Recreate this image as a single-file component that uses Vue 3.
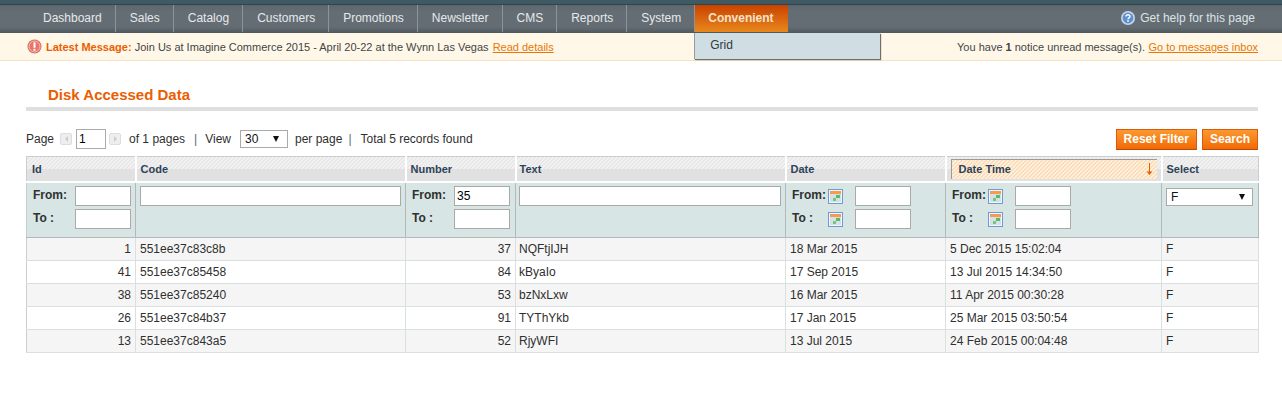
<template>
  <div class="page">
    <div class="strip"></div>
    <nav class="nav">
      <ul class="menu">
        <li v-for="item in menu" :key="item">{{ item }}</li>
        <li class="activo">
          Convenient
          <div class="desplegable">Grid</div>
        </li>
      </ul>
      <a class="help">
        <svg width="14" height="14" viewBox="0 0 14 14">
          <circle cx="7" cy="7" r="7" fill="#c6d8ee" />
          <circle cx="7" cy="7" r="5.4" fill="#5f90cc" />
          <path d="M5 5.6c0-2.5 4-2.5 4 0 0 1.4-2 1.3-2 2.7" fill="none" stroke="#fff" stroke-width="1.4" />
          <rect x="6.2" y="9.2" width="1.6" height="1.5" fill="#fff" />
        </svg>
        Get help for this page
      </a>
    </nav>
    <div class="aviso">
      <div class="aviso-izq">
        <svg width="15" height="15" viewBox="0 0 15 15">
          <circle cx="7.5" cy="7.5" r="7" fill="#d9675a" />
          <circle cx="7.5" cy="7.5" r="5.5" fill="#e8776a" stroke="#f6c4bc" stroke-width="1" />
          <rect x="6.5" y="3.4" width="2" height="5.4" fill="#fff" />
          <rect x="6.5" y="9.8" width="2" height="1.9" fill="#fff" />
        </svg>
        <span><b>Latest Message:</b> Join Us at Imagine Commerce 2015 - April 20-22 at the Wynn Las Vegas <a class="leer">Read details</a></span>
      </div>
      <div>You have <strong>1</strong> notice unread message(s). <a class="inbox">Go to messages inbox</a></div>
    </div>

    <main class="contenido">
      <h3 class="titulo">Disk Accessed Data</h3>

      <div class="acciones">
        <div class="pager">
          <span>Page</span>
          <span class="flecha"><i class="izq"></i></span>
          <input class="pagina" value="1" />
          <span class="flecha sig"><i class="der"></i></span>
          <span class="of">of 1 pages</span>
          <span class="sep">|</span>
          <span>View</span>
          <span class="combo vista">30<i></i></span>
          <span>per page</span>
          <span class="sep dos">|</span>
          <span>Total 5 records found</span>
        </div>
        <div class="botones">
          <button>Reset Filter</button>
          <button>Search</button>
        </div>
      </div>

      <table class="grid">
        <colgroup>
          <col style="width: 109px" />
          <col style="width: 270px" />
          <col style="width: 110px" />
          <col style="width: 270px" />
          <col style="width: 160px" />
          <col style="width: 216px" />
          <col style="width: 97px" />
        </colgroup>
        <thead>
          <tr class="cabecera">
            <th>Id</th>
            <th>Code</th>
            <th>Number</th>
            <th class="col-texto">Text</th>
            <th>Date</th>
            <th class="orden">
              <span class="orden-caja">Date Time
                <svg width="7" height="13" viewBox="0 0 7 13">
                  <path d="M3.5 0v11" stroke="#eb5e00" stroke-width="1" />
                  <path d="M0.5 8.5h6L3.5 12z" fill="#eb5e00" />
                </svg>
              </span>
            </th>
            <th>Select</th>
          </tr>
          <tr class="filtros">
            <th>
              <div class="rango"><label>From:</label><input /></div>
              <div class="rango"><label>To :</label><input /></div>
            </th>
            <th><input class="ancho" /></th>
            <th class="numero">
              <div class="rango"><label>From:</label><input value="35" /></div>
              <div class="rango"><label>To :</label><input /></div>
            </th>
            <th><input class="ancho texto" /></th>
            <th v-for="n in 2" :key="n">
              <div v-for="l in ['From:', 'To :']" :key="l" class="rango fecha">
                <label>{{ l }}</label>
                <svg class="cal" width="15" height="15" viewBox="0 0 15 15">
                  <rect x="0.5" y="0.5" width="14" height="14" fill="#f1f6fa" stroke="#6f9bd4" />
                  <rect x="2" y="2" width="11" height="3" fill="#f79a4f" />
                  <rect x="2" y="5" width="11" height="8" fill="#d3e2e8" />
                  <rect x="8" y="6" width="4" height="3" fill="#5fb760" />
                  <rect x="5" y="9" width="3" height="3" fill="#7cc47c" />
                </svg>
                <input />
              </div>
            </th>
            <th><span class="combo selector">F<i></i></span></th>
          </tr>
        </thead>
        <tbody>
          <tr v-for="(fila, i) in filas" :key="fila.id" :class="{ par: i % 2 === 0 }">
            <td class="num">{{ fila.id }}</td>
            <td>{{ fila.code }}</td>
            <td class="num">{{ fila.number }}</td>
            <td class="col-texto">{{ fila.text }}</td>
            <td>{{ fila.date }}</td>
            <td>{{ fila.time }}</td>
            <td>F</td>
          </tr>
        </tbody>
      </table>
    </main>
  </div>
</template>

<script setup>
const menu = ['Dashboard', 'Sales', 'Catalog', 'Customers', 'Promotions', 'Newsletter', 'CMS', 'Reports', 'System']

const filas = [
  { id: 1, code: '551ee37c83c8b', number: 37, text: 'NQFtjIJH', date: '18 Mar 2015', time: '5 Dec 2015 15:02:04' },
  { id: 41, code: '551ee37c85458', number: 84, text: 'kByaIo', date: '17 Sep 2015', time: '13 Jul 2015 14:34:50' },
  { id: 38, code: '551ee37c85240', number: 53, text: 'bzNxLxw', date: '16 Mar 2015', time: '11 Apr 2015 00:30:28' },
  { id: 26, code: '551ee37c84b37', number: 91, text: 'TYThYkb', date: '17 Jan 2015', time: '25 Mar 2015 03:50:54' },
  { id: 13, code: '551ee37c843a5', number: 52, text: 'RjyWFI', date: '13 Jul 2015', time: '24 Feb 2015 00:04:48' }
]
</script>

<style>
body {
  background: #fff;
}
</style>

<style scoped>
.page {
  font-family: "Liberation Sans", Arial, sans-serif;
  font-size: 12px;
  color: #2f2f2f;
  height: 408px;
  overflow: hidden;
}

.strip {
  height: 4px;
  background: #3f5a63;
  border-bottom: 1px solid #30444c;
  box-sizing: content-box;
}

.nav {
  height: 28px;
  display: flex;
  justify-content: space-between;
  align-items: stretch;
  background: linear-gradient(#5d666d 0, #646d74 6px, #646d74 22px, #4f575c 28px);
  color: #e6e9ea;
}

.menu {
  list-style: none;
  margin: 0;
  padding: 0 0 0 29px;
  display: flex;
  height: 27px;
}

.menu li {
  position: relative;
  padding: 0 13px 0 14px;
  line-height: 26px;
  border-right: 1px solid #8d9499;
}

.menu li.activo {
  width: 93px;
  padding: 0 0 0 13px;
  box-sizing: border-box;
  border-right: 0;
  font-weight: bold;
  color: #f6e2cd;
  background: linear-gradient(#c94300, #e8871c);
}

.desplegable {
  position: absolute;
  left: -1px;
  top: 28px;
  width: 186px;
  height: 26px;
  padding-left: 15px;
  box-sizing: border-box;
  line-height: 24px;
  font-weight: normal;
  color: #2f3a40;
  background: #cfdee3;
  border-left: 1px solid #9a9a9a;
  box-shadow: 1px 1px 1px rgba(0, 0, 0, 0.55);
  z-index: 2;
}

.help {
  display: flex;
  align-items: center;
  gap: 5px;
  padding: 0 27px 2px 0;
  color: #dfe3e5;
}

.aviso {
  height: 27px;
  padding: 0 24px 0 27px;
  display: flex;
  justify-content: space-between;
  align-items: center;
  font-size: 11px;
  background: #fff8e9;
  border-bottom: 1px solid #f5e2c2;
  color: #444;
  box-sizing: content-box;
}

.aviso-izq {
  display: flex;
  align-items: center;
}

.aviso-izq svg {
  margin-right: 4px;
}

.aviso b {
  color: #eb5e00;
}

.aviso a {
  color: #ea7601;
  text-decoration: underline;
}

.aviso .leer {
  margin-left: 1px;
}

.aviso .inbox {
  margin-left: 0.5px;
}

.contenido {
  padding: 0 24px 0 26px;
}

.titulo {
  margin: 24px 0 0;
  height: 22px;
  padding-left: 22px;
  line-height: 20px;
  font-size: 15px;
  font-weight: bold;
  color: #eb5e00;
  border-bottom: 4px solid #dfdfdf;
  box-sizing: content-box;
}

.acciones {
  margin-top: 18px;
  height: 27px;
  display: flex;
  justify-content: space-between;
}

.pager {
  display: flex;
  align-items: center;
  height: 20px;
  white-space: pre;
}

.flecha {
  width: 12px;
  height: 12px;
  margin: 0 4px 0 6px;
  background: #eee;
  border: 1px solid #ddd;
  border-radius: 2px;
  display: flex;
  align-items: center;
  justify-content: center;
  box-sizing: border-box;
}

.flecha.sig {
  margin: 0 4px 0 3px;
}

.flecha i {
  width: 0;
  height: 0;
  border: 3px solid transparent;
}

.flecha .izq {
  border-right-color: #ccc;
  border-left-width: 0;
}

.flecha .der {
  border-left-color: #ccc;
  border-right-width: 0;
}

.pagina {
  width: 30px;
  height: 20px;
  padding: 0 2px;
  box-sizing: border-box;
  border: 1px solid #aaa;
  font: 12px "Liberation Sans", Arial, sans-serif;
}

.of {
  margin-left: 4px;
}

.sep {
  margin: 0 8px 0 9px;
  color: #5a6b75;
}

.sep.dos {
  margin: 0 9px 0 6px;
}

.combo {
  display: inline-flex;
  align-items: center;
  justify-content: space-between;
  box-sizing: border-box;
  background: #fff;
  border: 1px solid #aaa;
  color: #111;
  font-weight: normal;
}

.combo i {
  width: 0;
  height: 0;
  border-left: 3.5px solid transparent;
  border-right: 3.5px solid transparent;
  border-top: 6px solid #111;
}

.vista {
  width: 48px;
  height: 18px;
  margin: 0 7px 0 9px;
  padding: 0 8px 0 4px;
}

.botones {
  display: flex;
  gap: 5px;
}

.botones button {
  height: 21px;
  padding: 0 7px 1px;
  font: bold 12px "Liberation Sans", Arial, sans-serif;
  color: #fff;
  background: linear-gradient(#fb9a2f, #f26a06);
  border: 1px solid #d95a0a;
  border-bottom-color: #b54a08;
}

.grid {
  width: 1232px;
  table-layout: fixed;
  border-collapse: collapse;
  border: 1px solid #c9cfd0;
}

.cabecera th {
  height: 25px;
  box-sizing: border-box;
  padding: 0 0 0 4px;
  text-align: left;
  font-size: 11px;
  color: #2e4258;
  border-right: 2px solid #fff;
  border-bottom: 2px solid #fff;
  background:
    repeating-linear-gradient(135deg, #f1f1f1 0, #f1f1f1 1.414px, #e8e8e8 1.414px, #e8e8e8 2.828px) top / 100% 12px no-repeat,
    #e1e1e1;
}

.cabecera th:first-child {
  padding-left: 5px;
}

.cabecera th.col-texto {
  padding-left: 3px;
}

.cabecera th:last-child {
  border-right: 0;
}

.cabecera .orden {
  padding: 1px 4px 1px 4px;
}

.orden-caja {
  display: flex;
  align-items: center;
  justify-content: space-between;
  height: 20px;
  padding: 0 4px 0 7px;
  border-left: 1px solid #a09a90;
  border-top: 1px solid #a09a90;
  background: repeating-linear-gradient(135deg, #fff1de 0, #fff1de 1.414px, #fbdcb8 1.414px, #fbdcb8 2.828px);
  box-sizing: border-box;
}

.filtros th {
  height: 56px;
  padding: 2px 4px 0 6px;
  box-sizing: border-box;
  vertical-align: top;
  text-align: left;
  border: 1px solid #b3b9b9;
  border-width: 1px 1px 1px 0;
  background: conic-gradient(#dbe8e8 25%, #d2e1e2 0 50%, #dbe8e8 0 75%, #d2e1e2 0) 0 0 / 2px 2px;
}

.filtros th.numero {
  padding-right: 5px;
}

.rango {
  display: flex;
  align-items: center;
  justify-content: space-between;
  height: 23px;
}

.rango label {
  margin-bottom: 2px;
  color: #303030;
}

.rango input,
.ancho {
  height: 20px;
  box-sizing: border-box;
  background: #fff;
  border: 1px solid #aaa;
  font: 12px "Liberation Sans", Arial, sans-serif;
  padding: 0 2px;
}

.rango input {
  width: 56px;
}

.ancho {
  width: 261px;
  margin: 1px 0 0 -2px;
  display: block;
}

.ancho.texto {
  width: 262px;
  margin-left: -3px;
}

.fecha {
  justify-content: flex-start;
}

.fecha label {
  width: 36px;
  flex: none;
  margin-right: -1px;
}

.cal {
  flex: none;
  margin-right: 12px;
  margin-left: 1px;
}

.selector {
  width: 87px;
  height: 18px;
  margin: 3px 0 0 -2px;
  padding: 0 7px 0 4px;
}

.grid td {
  height: 23px;
  box-sizing: border-box;
  padding: 0 4px 0 4px;
  border: 1px solid #dadfdf;
  border-width: 0 1px 1px 0;
  color: #2f2f2f;
}

.grid td.num {
  text-align: right;
}

.grid td.col-texto {
  padding-left: 3px;
}

.grid tr.par td {
  background: #f5f5f5;
}
</style>
